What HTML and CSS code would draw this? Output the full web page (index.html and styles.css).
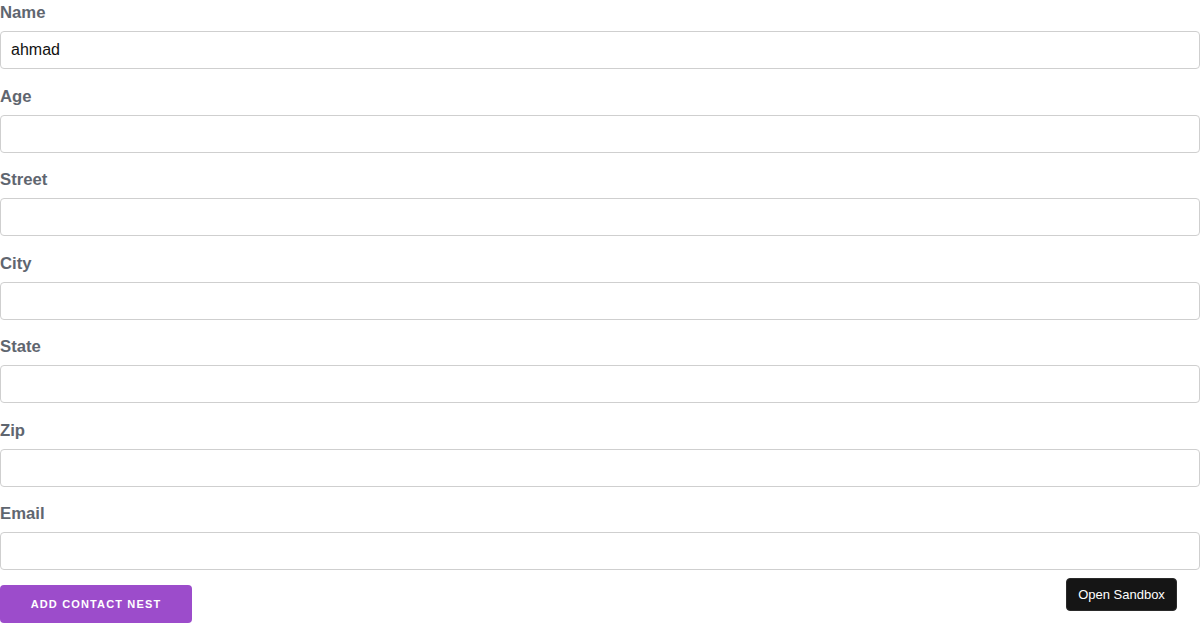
FILE: index.html
```html
<!DOCTYPE html>
<html>
<head>
<meta charset="utf-8">
<link rel="stylesheet" href="styles.css">
</head>
<body>
<form class="form">
  <label class="label">Name</label>
  <input class="field" type="text" value="ahmad">
  <label class="label">Age</label>
  <input class="field" type="text">
  <label class="label">Street</label>
  <input class="field" type="text">
  <label class="label">City</label>
  <input class="field" type="text">
  <label class="label">State</label>
  <input class="field" type="text">
  <label class="label">Zip</label>
  <input class="field" type="text">
  <label class="label">Email</label>
  <input class="field" type="text">
  <button class="submit" type="button">Add Contact Nest</button>
</form>
<a class="sandbox">Open Sandbox</a>
</body>
</html>
```
FILE: styles.css
```css
html, body {
  margin: 0;
  padding: 0;
  background: #fff;
  font-family: "Liberation Sans", Arial, sans-serif;
}
.form {
  display: flex;
  flex-direction: column;
  align-items: flex-start;
}
.label {
  display: block;
  font-size: 16.7px;
  font-weight: bold;
  line-height: 24px;
  color: #5f6670;
  margin-top: 1px;
  margin-bottom: 6px;
}
.field {
  box-sizing: border-box;
  width: 100%;
  height: 38px;
  margin: 0 0 14.5px 0;
  padding: 0 10px;
  border: 1px solid #cfcfcf;
  border-radius: 4px;
  font-family: "Liberation Sans", Arial, sans-serif;
  font-size: 16px;
  color: #111;
  outline: none;
}
.submit {
  margin-top: 0.5px;
  width: 192px;
  height: 38px;
  border: none;
  border-radius: 4px;
  background: #9c4ccb;
  color: #fff;
  font-family: "Liberation Sans", Arial, sans-serif;
  font-size: 11px;
  font-weight: bold;
  letter-spacing: 1.15px;
  text-transform: uppercase;
}
.sandbox {
  position: fixed;
  right: 23px;
  bottom: 19px;
  width: 111px;
  height: 33px;
  box-sizing: border-box;
  display: flex;
  align-items: center;
  justify-content: center;
  background: #151515;
  border: 1px solid #2a2a2a;
  border-radius: 4px;
  color: #fff;
  font-size: 13px;
}
```
